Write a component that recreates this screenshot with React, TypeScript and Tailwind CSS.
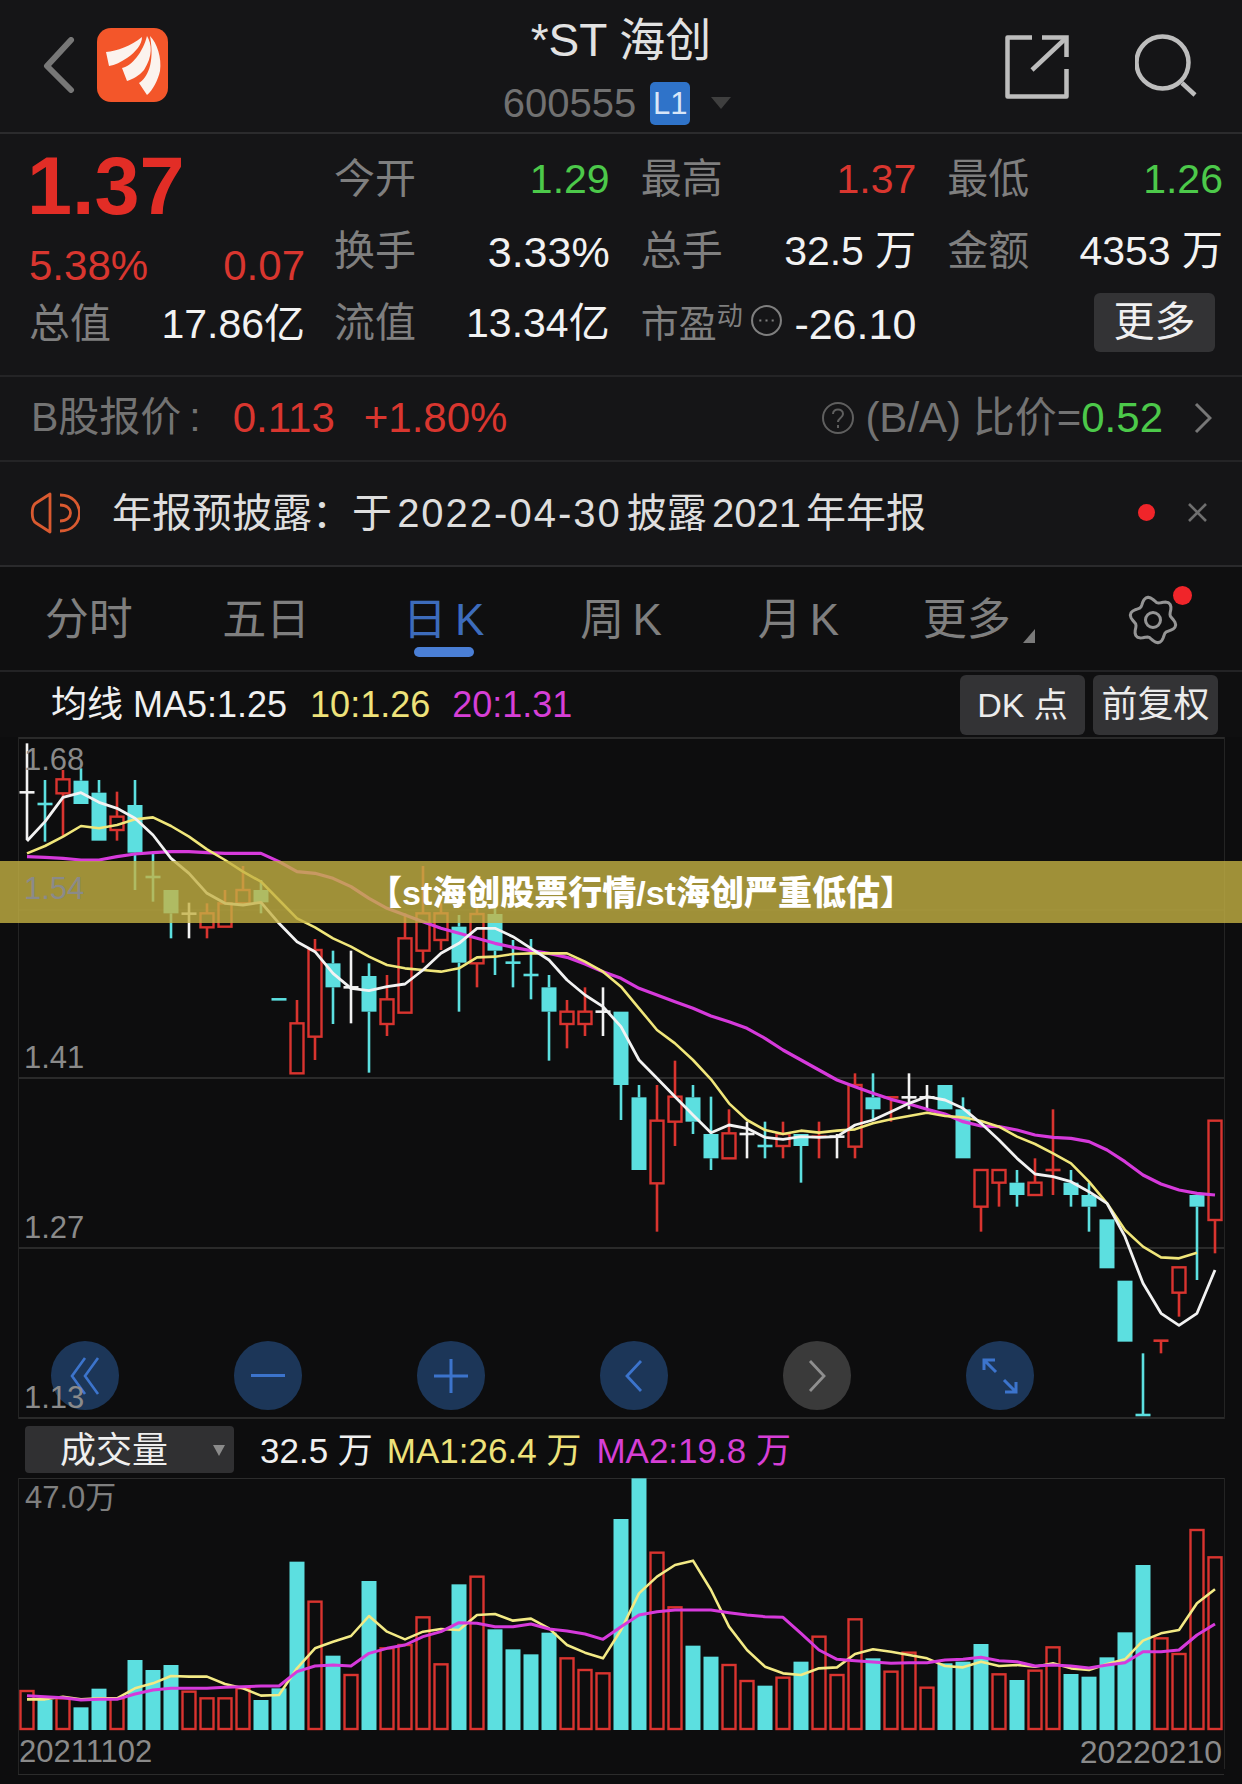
import React from "react";

const RED = "#d9342f";
const CYAN = "#5cdfe0";
const WHITE = "#f2f2f2";
const YELLOW = "#f0e67a";
const MAGENTA = "#d63adb";

const barX = (i: number) => 27 + 18 * i;

type Candle = [string, number, number, number, number];

// kind, high, body top, body bottom, low (measured in 3x crop units)
const CANDLES_A: Candle[] = [
	["w", 10, 157, 157, 300],
	["c", 120, 192, 192, 305],
	["r", 90, 118, 160, 290],
	["c", 85, 122, 192, 192],
	["c", 120, 158, 302, 302],
	["r", 155, 230, 270, 302],
	["c", 120, 195, 338, 450],
	["c", 340, 411, 411, 485],
	["c", 450, 450, 520, 595],
	["w", 488, 521, 521, 595],
	["r", 490, 520, 562, 595],
	["r", 450, 490, 560, 560],
	["r", 378, 450, 490, 490],
	["c", 420, 450, 487, 520],
	["c", 778, 778, 778, 778],
	["r", 780, 850, 1000, 1000],
	["r", 597, 630, 890, 960],
	["c", 632, 670, 742, 852],
	["w", 632, 742, 742, 850],
	["c", 670, 708, 815, 998],
	["r", 705, 778, 852, 888],
	["r", 520, 595, 818, 818],
	["r", 378, 520, 632, 668],
	["r", 490, 520, 600, 630],
	["c", 525, 560, 668, 815],
	["r", 490, 522, 670, 742],
	["c", 490, 522, 632, 705],
	["c", 600, 668, 668, 742],
	["c", 597, 705, 705, 778],
	["c", 705, 742, 815, 962],
	["r", 780, 815, 852, 925],
	["r", 742, 815, 852, 888],
	["w", 742, 815, 815, 888],
	["c", 815, 815, 1035, 1140],
];

const CANDLES_B: Candle[] = [
	["c", 135, 172, 390, 390],
	["r", 135, 242, 430, 575],
	["r", 62, 170, 245, 318],
	["c", 135, 172, 245, 282],
	["c", 170, 282, 355, 390],
	["r", 208, 280, 355, 355],
	["w", 245, 282, 282, 355],
	["c", 245, 318, 318, 355],
	["r", 245, 282, 318, 355],
	["c", 282, 282, 318, 428],
	["r", 245, 290, 290, 355],
	["w", 282, 290, 290, 355],
	["r", 100, 135, 320, 355],
	["c", 100, 172, 208, 240],
	["r", 172, 172, 172, 245],
	["w", 100, 172, 172, 208],
	["w", 135, 172, 172, 208],
	["c", 135, 135, 208, 208],
	["c", 172, 208, 355, 355],
	["r", 390, 390, 500, 575],
	["r", 390, 390, 428, 500],
	["c", 390, 428, 465, 500],
	["r", 355, 428, 465, 465],
	["r", 208, 390, 390, 465],
	["c", 390, 428, 465, 500],
	["c", 428, 465, 500, 575],
	["c", 538, 538, 685, 685],
	["c", 722, 722, 905, 905],
	["c", 940, 1125, 1125, 1125],
	["r", 902, 902, 902, 940],
	["r", 682, 682, 758, 830],
	["c", 465, 465, 500, 720],
	["r", 242, 242, 540, 640],
];

// price averages: first part from the upper crop, second part from the lower one
const MA5 = [303, 245, 172, 158, 187, 205, 235, 285, 355, 400, 460, 490, 495, 487, 550, 605, 635, 700, 745, 752, 740, 732, 690, 640, 610, 565, 565, 590, 625, 660, 720, 765, 800, 860];
const MA5B = [60, 115, 170, 225, 278, 255, 265, 292, 298, 290, 292, 290, 255, 240, 215, 190, 170, 180, 205, 250, 300, 355, 402, 410, 425, 455, 490, 590, 730, 820, 856, 820, 690];
const MA10 = [340, 318, 290, 258, 265, 255, 238, 232, 258, 290, 328, 360, 395, 425, 480, 535, 562, 595, 620, 650, 675, 685, 690, 695, 685, 652, 650, 642, 640, 640, 640, 665, 695, 740];
const MA10B = [-95, -30, 10, 60, 118, 190, 240, 270, 282, 272, 278, 272, 268, 250, 238, 228, 218, 228, 232, 243, 260, 290, 312, 340, 370, 425, 490, 570, 620, 652, 655, 638];
const MA20 = [350, 352, 355, 360, 360, 350, 342, 338, 335, 335, 338, 340, 340, 340, 365, 395, 400, 415, 440, 475, 505, 525, 545, 565, 580, 595, 610, 622, 632, 640, 652, 672, 695, 715];
const MA20B = [-155, -135, -115, -95, -72, -55, -35, -5, 30, 60, 90, 120, 140, 160, 178, 192, 208, 222, 245, 258, 260, 270, 285, 292, 295, 305, 330, 365, 405, 432, 450, 460, 465];

const VOLUME: [string, number][] = [
	["r", 1083], ["c", 1110], ["r", 1105], ["c", 1132], ["c", 1076], ["r", 1105], ["c", 990], ["c", 1020], ["c", 1005], ["r", 1085], ["r", 1105], ["r", 1105], ["r", 1075], ["c", 1110], ["c", 1075], ["c", 695], ["r", 815], ["c", 977], ["r", 1035], ["c", 753], ["r", 955], ["r", 945], ["r", 862], ["r", 1003], ["c", 763], ["r", 740], ["c", 898], ["c", 958], ["c", 973], ["c", 908], ["r", 985], ["r", 1020], ["r", 1030], ["c", 567],
];
const VOLUME_B: [string, number][] = [
	["c", 145], ["r", 368], ["r", 532], ["c", 647], ["c", 680], ["r", 705], ["r", 753], ["c", 767], ["r", 743], ["c", 695], ["r", 620], ["r", 735], ["r", 568], ["c", 685], ["r", 725], ["r", 668], ["r", 773], ["c", 700], ["c", 695], ["c", 642], ["r", 733], ["c", 750], ["r", 722], ["r", 652], ["c", 732], ["c", 740], ["c", 682], ["c", 607], ["c", 405], ["r", 625], ["r", 672], ["r", 300], ["r", 382],
];
const VOL_MA1 = [1108, 1108, 1100, 1108, 1105, 1105, 1075, 1060, 1038, 1040, 1040, 1062, 1075, 1097, 1095, 1015, 955, 935, 918, 858, 905, 928, 905, 897, 900, 855, 852, 872, 866, 895, 945, 968, 985, 900];
const VOL_MA1B = [490, 440, 405, 392, 480, 590, 660, 710, 730, 735, 715, 712, 672, 658, 665, 675, 685, 708, 712, 695, 708, 705, 710, 700, 715, 720, 702, 688, 632, 610, 600, 520, 478];
const VOL_MA2 = [1097, 1100, 1103, 1110, 1108, 1108, 1092, 1080, 1075, 1075, 1075, 1072, 1070, 1068, 1068, 1025, 1008, 1005, 1008, 970, 955, 945, 920, 905, 878, 880, 890, 890, 882, 897, 903, 912, 928, 890];
const VOL_MA2B = [555, 545, 540, 540, 540, 548, 555, 560, 562, 610, 660, 688, 692, 696, 700, 698, 698, 690, 688, 682, 692, 695, 708, 705, 708, 714, 705, 698, 665, 665, 660, 615, 582];

const CHART_TOP = 737;
const VOL_TOP = 1478;

const priceY = (z: number, part: 0 | 1) => (part === 0 ? 740 : 1040) + z / 3 - CHART_TOP;
const volY = (z: number, part: 0 | 1) => (part === 0 ? 1330 : 1430) + z / 3 - VOL_TOP;

function linePoints(
	a: number[],
	b: number[],
	toY: (z: number, part: 0 | 1) => number,
) {
	const first = a.map((z, i) => `${barX(i)},${toY(z, 0)}`);
	const second = b.map((z, i) => `${barX(i + a.length)},${toY(z, 1)}`);
	return [...first, ...second].join(" ");
}

function CandleMark({ c, x, part }: { c: Candle; x: number; part: 0 | 1 }) {
	const [kind, high, top, bottom, low] = c;
	const color = kind === "r" ? RED : kind === "c" ? CYAN : WHITE;
	const yh = priceY(high, part);
	const yt = priceY(top, part);
	const yb = priceY(bottom, part);
	const yl = priceY(low, part);
	const flat = top === bottom;
	return (
		<g>
			{yh < yt && <line x1={x} x2={x} y1={yh} y2={yt} stroke={color} strokeWidth={2.6} />}
			{yb < yl && <line x1={x} x2={x} y1={yb} y2={yl} stroke={color} strokeWidth={2.6} />}
			{flat ? (
				<line x1={x - 7.5} x2={x + 7.5} y1={yt} y2={yt} stroke={color} strokeWidth={2.6} />
			) : kind === "r" ? (
				<rect x={x - 6.5} y={yt} width={13} height={yb - yt} fill="none" stroke={color} strokeWidth={2.4} />
			) : (
				<rect x={x - 7.5} y={yt} width={15} height={yb - yt} fill={color} />
			)}
		</g>
	);
}

function PriceChart() {
	return (
		<svg width={1242} height={682} className="block">
			<g stroke="#2a2a2a" strokeWidth={2}>
				<line x1={18} x2={1224} y1={1} y2={1} />
				<line x1={18} x2={1224} y1={173} y2={173} stroke="#181818" />
				<line x1={18} x2={1224} y1={341} y2={341} />
				<line x1={18} x2={1224} y1={511} y2={511} />
				<line x1={18} x2={1224} y1={681} y2={681} />
			</g>
			<line x1={18.5} x2={18.5} y1={0} y2={682} stroke="#242424" />
			<line x1={1224.5} x2={1224.5} y1={0} y2={682} stroke="#242424" />
			{CANDLES_A.map((c, i) => (
				<CandleMark key={i} c={c} x={barX(i)} part={0} />
			))}
			{CANDLES_B.map((c, i) => (
				<CandleMark key={i} c={c} x={barX(i + CANDLES_A.length)} part={1} />
			))}
			<polyline points={linePoints(MA20, MA20B, priceY)} fill="none" stroke={MAGENTA} strokeWidth={3.2} strokeLinejoin="round" />
			<polyline points={linePoints(MA10, MA10B, priceY)} fill="none" stroke={YELLOW} strokeWidth={2.6} strokeLinejoin="round" />
			<polyline points={linePoints(MA5, MA5B, priceY)} fill="none" stroke={WHITE} strokeWidth={2.8} strokeLinejoin="round" />
		</svg>
	);
}

function VolumeBar({ kind, top, x }: { kind: string; top: number; x: number }) {
	const base = 252;
	if (kind === "c") {
		return <rect x={x - 7.5} y={top} width={15} height={base - top} fill={CYAN} />;
	}
	return <rect x={x - 6.5} y={top} width={13} height={base - top - 1} fill="none" stroke={RED} strokeWidth={2.4} />;
}

function VolumeChart() {
	return (
		<svg width={1242} height={297} className="block">
			<line x1={18} x2={1224} y1={0.5} y2={0.5} stroke="#2c2c2c" />
			<line x1={18.5} x2={18.5} y1={0} y2={297} stroke="#242424" />
			<line x1={1224.5} x2={1224.5} y1={0} y2={291} stroke="#242424" />
			<line x1={18} x2={1224} y1={296.5} y2={296.5} stroke="#2c2c2c" />
			{VOLUME.map(([k, t], i) => (
				<VolumeBar key={i} kind={k} top={volY(t, 0)} x={barX(i)} />
			))}
			{VOLUME_B.map(([k, t], i) => (
				<VolumeBar key={i} kind={k} top={volY(t, 1)} x={barX(i + VOLUME.length)} />
			))}
			<polyline points={linePoints(VOL_MA1, VOL_MA1B, volY)} fill="none" stroke="#f3ea85" strokeWidth={2.6} strokeLinejoin="round" />
			<polyline points={linePoints(VOL_MA2, VOL_MA2B, volY)} fill="none" stroke={MAGENTA} strokeWidth={3} strokeLinejoin="round" />
		</svg>
	);
}

function Logo() {
	return (
		<svg width={71} height={74} viewBox="0 0 71 74" className="shrink-0">
			<rect width={71} height={74} rx={14} fill="#f3562a" />
			<path d="M9 24 C20 23 34 18 45 9 C45 16 39 24 30 30 C24 34 18 37 12 38 Z" fill="#fbf3ee" />
			<path d="M25 40 C35 38 46 24 50 8 C55 16 56 28 47 42 C42 48 36 51 30 53 Z" fill="#fbf3ee" />
			<path d="M42 55 C50 50 58 36 53 8 C60 15 65 30 63 43 C61 52 56 62 50 67 Z" fill="#fbf3ee" />
		</svg>
	);
}

function gearPath(cx: number, cy: number) {
	const pts: string[] = [];
	for (let a = 0; a < 360; a += 6) {
		const t = (a * Math.PI) / 180;
		const r = 20.5 + 2.8 * Math.cos(6 * t + Math.PI / 2);
		pts.push(`${(cx + r * Math.sin(t)).toFixed(1)},${(cy - r * Math.cos(t)).toFixed(1)}`);
	}
	return pts.join(" ");
}

function StatCell({
	label,
	value,
	tone = "text-[#f2f2f2] text-[41px]",
}: {
	label: string;
	value: string;
	tone?: string;
}) {
	return (
		<div className="flex items-center justify-between h-[72px]">
			<span className="text-[41px] text-[#7f7f7f]">{label}</span>
			<span className={tone}>{value}</span>
		</div>
	);
}

const GREEN = "text-[#4cc94a]";
const REDTEXT = "text-[#d9362f]";

function RoundButton({ gray, children }: { gray?: boolean; children: React.ReactNode }) {
	return (
		<div
			className={`w-[68px] h-[69px] rounded-full flex items-center justify-center ${gray ? "bg-[#3a3a3a]" : "bg-[#1c3658]"}`}
		>
			{children}
		</div>
	);
}

const TABS = ["分时", "五日", "日 K", "周 K", "月 K"];

export default function App() {
	return (
		<div className="relative w-[1242px] h-[1784px] overflow-hidden bg-[#0d0d0e] font-['Liberation_Sans','Noto_Sans_CJK_SC',sans-serif]">
			<div className="bg-[#151517]">
				{/* Header */}
				<div className="h-[134px] border-b-2 border-[#2b2b2d] grid grid-cols-[1fr_auto_1fr] items-start">
					<div className="flex items-center pl-[42px] pt-[28px]">
						<svg width={34} height={56} viewBox="0 0 34 56" fill="none" className="mr-[21px]">
							<path d="M29 3 L5 29 L29 53" stroke="#777777" strokeWidth={6} strokeLinecap="round" strokeLinejoin="round" />
						</svg>
						<Logo />
					</div>
					<div className="flex flex-col items-center pt-[14px]">
						<div className="text-[46px] leading-[52px] text-[#e2e2e2]">*ST 海创</div>
						<div className="flex items-center mt-[15px] pr-[8px]">
							<span className="text-[40px] leading-[44px] text-[#717171] mr-[14px]">600555</span>
							<span className="w-[40px] h-[43px] rounded-[5px] bg-[#2f73c9] text-[#d8e6f8] text-[31px] leading-[43px] text-center">L1</span>
							<span className="ml-[21px] w-0 h-0 border-x-[10px] border-x-transparent border-t-[12px] border-t-[#3f3f3f]" />
						</div>
					</div>
					<div className="flex justify-end items-start pt-[33px] pr-[45px] gap-[66px]">
						<svg width={64} height={66} viewBox="0 0 64 66" fill="none" stroke="#bdbdbd" strokeWidth={4.5}>
							<path d="M27 4.5 H2.5 V63.5 H61.5 V36" strokeLinejoin="round" />
							<path d="M37 4.5 H61.5 V24" />
							<path d="M27 37 L60 6" />
						</svg>
						<svg width={62} height={64} viewBox="0 0 62 64" fill="none" stroke="#bdbdbd" strokeWidth={4.5}>
							<circle cx={27.5} cy={29.5} r={26} />
							<path d="M47 50 L60 62" />
						</svg>
					</div>
				</div>

				{/* Quote */}
				<div className="h-[243px] border-b-2 border-[#242426] flex pl-[29px] pr-[19px] pt-[10px]">
					<div className="w-[276px] mr-[29px] flex flex-col">
						<div className="ml-[-2px] mt-[12px] text-[81px] leading-[60px] font-bold text-[#e22d26]">1.37</div>
						<div className={`mt-[30px] flex justify-between text-[42px] leading-[40px] ${REDTEXT}`}>
							<span>5.38%</span>
							<span>0.07</span>
						</div>
						<div className="mt-[3px]">
							<StatCell label="总值" value="17.86亿" />
						</div>
					</div>
					<div className="flex-1 grid grid-cols-3 gap-x-[31px] content-start">
						<StatCell label="今开" value="1.29" tone={`text-[41px] ${GREEN}`} />
						<StatCell label="最高" value="1.37" tone={`text-[41px] ${REDTEXT}`} />
						<StatCell label="最低" value="1.26" tone={`text-[41px] ${GREEN}`} />
						<StatCell label="换手" value="3.33%" tone="text-[43px] text-[#f2f2f2]" />
						<StatCell label="总手" value="32.5 万" />
						<StatCell label="金额" value="4353 万" />
						<StatCell label="流值" value="13.34亿" />
						<div className="flex items-center justify-between h-[72px]">
							<div className="flex items-center">
								<span className="text-[38px] text-[#7f7f7f]">市盈</span>
								<span className="text-[26px] leading-[26px] text-[#7f7f7f] self-start mt-[7px]">动</span>
								<svg width={33} height={33} viewBox="0 0 32 32" className="ml-[7px] mb-[8px]" fill="none" stroke="#7f7f7f" strokeWidth={2}>
									<circle cx={16} cy={16} r={14} />
									<path d="M9 16 H11 M15 16 H17 M21 16 H23" />
								</svg>
							</div>
							<span className="text-[43px] text-[#f2f2f2]">-26.10</span>
						</div>
						<div className="flex items-start justify-end h-[72px]">
							<div className="w-[121px] h-[59px] mt-[5px] mr-[8px] rounded-[6px] bg-[#333335] text-[41px] leading-[59px] text-center text-[#f0f0f0]">更多</div>
						</div>
					</div>
				</div>

				{/* B share row */}
				<div className="h-[85px] pb-[2px] border-b-2 border-[#242426] flex items-center pl-[31px] pr-[30px] text-[42px]">
					<span className="text-[41px] text-[#737373]">B股报价</span>
					<span className="text-[41px] text-[#737373] ml-[8px] mr-[32px]">:</span>
					<span className={REDTEXT}>0.113</span>
					<span className={`${REDTEXT} ml-[29px]`}>+1.80%</span>
					<svg width={34} height={34} viewBox="0 0 34 34" className="ml-auto mr-[10px]" fill="none" stroke="#5f5f5f" strokeWidth={2}>
						<circle cx={17} cy={17} r={15} />
						<path d="M12 13 C12 7 22 7 22 13 C22 17 17 17 17 21 M17 24 V27" />
					</svg>
					<span className="text-[42px] text-[#737373]">(B/A) 比价=</span>
					<span className="text-[#4cc94a]">0.52</span>
					<svg width={18} height={32} viewBox="0 0 18 32" className="ml-[31px]" fill="none" stroke="#777" strokeWidth={3}>
						<path d="M2 2 L16 16 L2 30" />
					</svg>
				</div>

				{/* Notice */}
				<div className="h-[105px] pb-[2px] border-b-2 border-[#2a2a2c] flex items-center pl-[30px] pr-[34px]">
					<svg width={50} height={42} viewBox="0 0 50 42" fill="none" stroke="#d95a30" strokeWidth={2.8} className="mr-[32px]">
						<path d="M20 2 V40 L6 31 C1 28 1 14 6 11 Z" strokeLinejoin="round" />
						<path d="M30 3 C56 3 56 39 30 39" />
						<path d="M30 13 C44 13 44 29 30 29" />
					</svg>
					<span className="text-[40px] text-[#dedede] [word-spacing:-6px]">
						年报预披露：于 <span className="tracking-[2px]">2022-04-30</span> 披露 2021 年年报
					</span>
					<span className="ml-auto mr-[32px] w-[17px] h-[17px] rounded-full bg-[#f0252a]" />
					<svg width={21} height={21} viewBox="0 0 21 21" stroke="#6f6f6f" strokeWidth={2.6}>
						<path d="M2 2 L19 19 M19 2 L2 19" />
					</svg>
				</div>
			</div>

			{/* Tabs */}
			<div className="h-[105px] pt-[3px] bg-[#0f0f10] border-b-2 border-[#232325] grid grid-cols-7 items-center text-[44px] text-[#7f7f7f] [word-spacing:-4px]">
				{TABS.map((t) => (
					<div key={t} className={`relative text-center ${t === "日 K" ? "text-[#3d6cbc]" : ""}`}>
						{t}
						{t === "日 K" && (
							<div className="absolute left-1/2 -translate-x-1/2 top-[60px] w-[60px] h-[10px] rounded-full bg-[#4a7fd6]" />
						)}
					</div>
				))}
				<div className="flex items-end justify-center">
					<span className="ml-[6px]">更多</span>
					<span className="ml-[12px] mb-[10px] w-0 h-0 border-l-[12px] border-l-transparent border-b-[14px] border-b-[#7a7a7a]" />
				</div>
				<div className="relative flex justify-center">
					<svg width={52} height={52} viewBox="0 0 52 52" fill="none" stroke="#959595" strokeWidth={3}>
						<polygon points={gearPath(26, 26)} strokeLinejoin="round" />
						<circle cx={26} cy={26} r={7.5} />
					</svg>
					<span className="absolute left-[108px] top-[-8px] w-[19px] h-[19px] rounded-full bg-[#f0252a]" />
				</div>
			</div>

			{/* Averages row */}
			<div className="h-[65px] bg-[#0f0f10] flex items-center pl-[51px] pr-[24px] text-[36px]">
				<span className="text-[#f0f0f0]">均线 MA5:1.25</span>
				<span className="ml-[23px] text-[#eee27a]">10:1.26</span>
				<span className="ml-[22px] text-[#d63fd6]">20:1.31</span>
				<div className="ml-auto flex gap-[8px] items-center">
					<div className="w-[125px] h-[60px] rounded-[6px] bg-[#333335] text-[#ececec] text-[34px] text-center leading-[60px]">DK 点</div>
					<div className="w-[125px] h-[60px] rounded-[6px] bg-[#333335] text-[#ececec] text-center leading-[60px]">前复权</div>
				</div>
			</div>

			{/* Price chart */}
			<div className="relative h-[682px]">
				<PriceChart />
				{[
					["1.68", "top-[5px]"],
					["1.54", "top-[134px]"],
					["1.41", "top-[303px]"],
					["1.27", "top-[473px]"],
					["1.13", "top-[643px]"],
				].map(([label, pos]) => (
					<span key={label} className={`absolute z-10 left-[24px] ${pos} text-[31px] leading-[36px] text-[#8a8a8a]`}>
						{label}
					</span>
				))}
				<div className="absolute left-[51px] right-[208px] top-[604px] flex justify-between">
					<RoundButton>
						<svg width={30} height={40} viewBox="0 0 30 40" fill="none" stroke="#3c74cc" strokeWidth={2.6}>
							<path d="M15 2 L2 20 L15 38 M28 2 L15 20 L28 38" />
						</svg>
					</RoundButton>
					<RoundButton>
						<div className="w-[34px] h-[3px] bg-[#3c74cc]" />
					</RoundButton>
					<RoundButton>
						<svg width={34} height={34} viewBox="0 0 34 34" stroke="#3c74cc" strokeWidth={3}>
							<path d="M0 17 H34 M17 0 V34" />
						</svg>
					</RoundButton>
					<RoundButton>
						<svg width={18} height={34} viewBox="0 0 18 34" fill="none" stroke="#3c74cc" strokeWidth={2.8}>
							<path d="M16 2 L2 17 L16 32" />
						</svg>
					</RoundButton>
					<RoundButton gray>
						<svg width={18} height={34} viewBox="0 0 18 34" fill="none" stroke="#8f8f8f" strokeWidth={2.8}>
							<path d="M2 2 L16 17 L2 32" />
						</svg>
					</RoundButton>
					<RoundButton>
						<svg width={36} height={36} viewBox="0 0 36 36" fill="none" stroke="#3c74cc" strokeWidth={3}>
							<path d="M2 12 V2 H13 M2 2 L14 14 M34 24 V34 H23 M34 34 L22 22" />
						</svg>
					</RoundButton>
				</div>
			</div>

			{/* Volume header */}
			<div className="h-[59px] pt-[2px] flex items-center pl-[25px] text-[35px]">
				<div className="relative w-[209px] h-[47px] rounded-[4px] bg-[#303032] flex items-center pl-[35px] pt-[2px] text-[36px] text-[#efefef]">
					成交量
					<span className="absolute right-[9px] top-[19px] w-0 h-0 border-x-[6px] border-x-transparent border-t-[11px] border-t-[#8a8a8a]" />
				</div>
				<span className="ml-[26px] mt-[3px] text-[#f0f0f0]">32.5 万</span>
				<span className="ml-[14px] mt-[3px] text-[#eee27a]">MA1:26.4 万</span>
				<span className="ml-[15px] mt-[3px] text-[#d63fd6]">MA2:19.8 万</span>
			</div>

			{/* Volume chart */}
			<div className="relative h-[297px]">
				<VolumeChart />
				<span className="absolute left-[25px] top-[2px] text-[31px] leading-[36px] text-[#7f7f7f]">47.0万</span>
				<span className="absolute left-[19px] top-[256px] text-[31px] leading-[36px] text-[#8a8a8a]">20211102</span>
				<span className="absolute right-[20px] top-[256px] text-[32px] leading-[36px] text-[#8a8a8a]">20220210</span>
			</div>

			{/* Title banner */}
			<div className="absolute left-0 right-0 top-[861px] h-[62px] pl-[40px] pt-[2px] bg-[#c4b143]/80 flex items-center justify-center text-[34px] font-black text-white">
				【st海创股票行情/st海创严重低估】
			</div>
		</div>
	);
}
